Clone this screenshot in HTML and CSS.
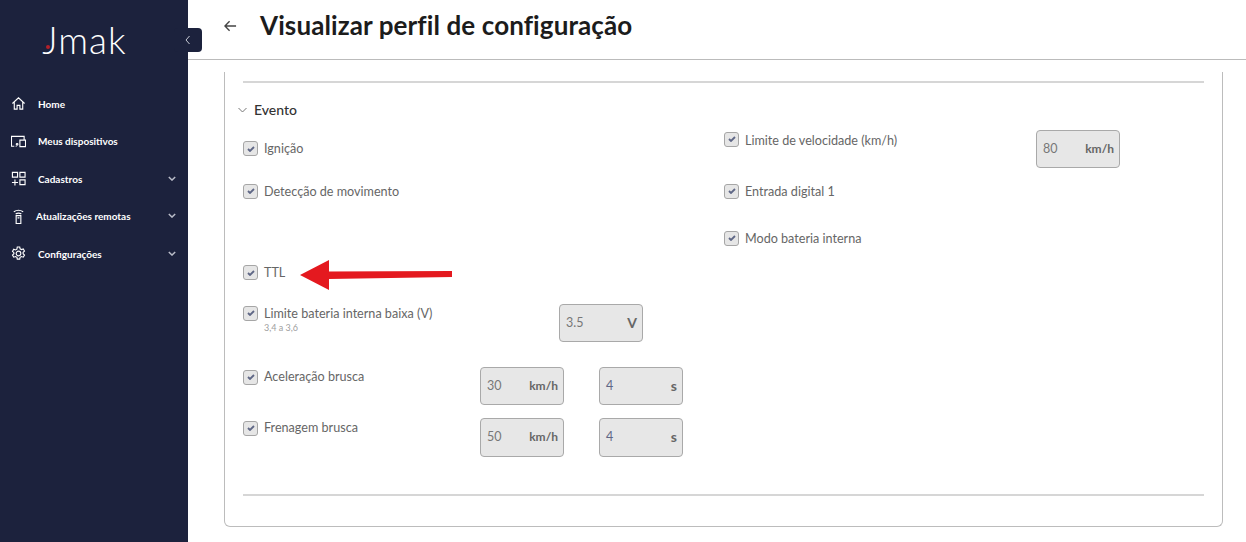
FILE: index.html
```html
<!DOCTYPE html>
<html lang="pt-BR">
<head>
  <meta charset="UTF-8">
  <title>Visualizar perfil de configuração</title>
  <link rel="stylesheet" href="styles.css">
</head>
<body>
  <div class="layout">
    <!-- Sidebar -->
    <aside class="sidebar">
      <div class="logo"><i class="logo-dot"></i>Jmak</div>
      <button class="collapse" aria-label="Recolher menu">
        <svg width="8" height="10" viewBox="0 0 8 10"><path d="M5.500 1 2 5l3.500 4" fill="none" stroke="#c9ccd6" stroke-width="1"/></svg>
      </button>
      <nav class="menu">
        <a class="menu-item">
          <svg class="menu-icon" viewBox="0 0 16 16"><path d="M1.500 8 8 2l6.500 6M3.500 6.500V14h3v-4h3v4h3V6.500"/></svg>
          <span>Home</span>
        </a>
        <a class="menu-item">
          <svg class="menu-icon" viewBox="0 0 16 16"><path d="M3.500 13H.500V2.500h13.500V6M9.500 6.500h6V13.500h-6zM5 13h1"/><circle cx="6.500" cy="11" r=".9"/></svg>
          <span>Meus dispositivos</span>
        </a>
        <a class="menu-item">
          <svg class="menu-icon" viewBox="0 0 16 16"><path d="M1.500 1.500h5.500v5h-5.500zM9.500 1.500h5.500v5h-5.500zM9.500 9.500h5.500v5h-5.500zM4.200 9v6.500M1 12.200h6.500"/></svg>
          <span>Cadastros</span>
          <svg class="menu-caret" viewBox="0 0 10 6"><path d="m1 1 4 4 4-4"/></svg>
        </a>
        <a class="menu-item narrow">
          <svg class="menu-icon" viewBox="0 0 16 16"><path d="M5.500 7h5v8.500h-5zM7 9.500h2M3 3c3-2 7-2 10 0M5 5.200c2-1 4-1 6 0"/></svg>
          <span>Atualizações remotas</span>
          <svg class="menu-caret" viewBox="0 0 10 6"><path d="m1 1 4 4 4-4"/></svg>
        </a>
        <a class="menu-item">
          <svg class="menu-icon" viewBox="0 0 16 16"><circle cx="8" cy="8" r="2.500"/><path d="m6.700 1h2.600l.4 2 1.500.8 1.900-.7 1.300 2.300-1.500 1.300v1.600l1.500 1.300-1.300 2.300-1.900-.7-1.500.8-.4 2H6.700l-.4-2-1.500-.8-1.900.7-1.300-2.300 1.500-1.300V7.100L1.600 5.800l1.300-2.300 1.900.7 1.500-.8z"/></svg>
          <span>Configurações</span>
          <svg class="menu-caret" viewBox="0 0 10 6"><path d="m1 1 4 4 4-4"/></svg>
        </a>
      </nav>
    </aside>

    <main class="main">
      <header class="topbar">
        <svg class="back" width="13" height="12" viewBox="0 0 14 12"><path d="M13 6H1.500M6 1 1 6l5 5" fill="none" stroke="#444" stroke-width="1.500"/></svg>
        <h1>Visualizar perfil de configuração</h1>
      </header>

      <div class="content">
        <section class="card">
          <hr class="rule">
          <h2 class="section-title">
            <svg width="9" height="6" viewBox="0 0 9 6"><path d="m.5 1 4 4 4-4" fill="none" stroke="#777" stroke-width="1"/></svg>
            Evento
          </h2>

          <div class="columns">
            <!-- Left column -->
            <div class="col col-left">
              <div class="row row-ignicao">
                <span class="check"><svg viewBox="0 0 8 6"><path d="m1 3 2 2 4-4"/></svg></span>
                <span class="label">Ignição</span>
              </div>
              <div class="row row-movimento">
                <span class="check"><svg viewBox="0 0 8 6"><path d="m1 3 2 2 4-4"/></svg></span>
                <span class="label">Detecção de movimento</span>
              </div>
              <div class="row row-ttl">
                <span class="check"><svg viewBox="0 0 8 6"><path d="m1 3 2 2 4-4"/></svg></span>
                <span class="label">TTL</span>
                <svg class="arrow" width="153" height="30" viewBox="0 0 153 30"><path d="M0 15 29 0v11.500L152 11v6L29 19v11z" fill="#e4191f"/></svg>
              </div>
              <div class="row row-bateria">
                <span class="check"><svg viewBox="0 0 8 6"><path d="m1 3 2 2 4-4"/></svg></span>
                <div class="label-wide">
                  <span class="label">Limite bateria interna baixa (V)</span>
                  <small class="hint">3,4 a 3,6</small>
                </div>
                <div class="field"><span>3.5</span><b class="unit-large">V</b></div>
              </div>
              <div class="row row-pair">
                <span class="check"><svg viewBox="0 0 8 6"><path d="m1 3 2 2 4-4"/></svg></span>
                <span class="label label-pair">Aceleração brusca</span>
                <div class="field"><span>30</span><b>km/h</b></div>
                <div class="field"><span class="num">4</span><b class="unit-large">s</b></div>
              </div>
              <div class="row row-pair last">
                <span class="check"><svg viewBox="0 0 8 6"><path d="m1 3 2 2 4-4"/></svg></span>
                <span class="label label-pair">Frenagem brusca</span>
                <div class="field"><span>50</span><b>km/h</b></div>
                <div class="field"><span class="num">4</span><b class="unit-large">s</b></div>
              </div>
            </div>

            <!-- Right column -->
            <div class="col col-right">
              <div class="row row-velocidade">
                <span class="check"><svg viewBox="0 0 8 6"><path d="m1 3 2 2 4-4"/></svg></span>
                <span class="label label-speed">Limite de velocidade (km/h)</span>
                <div class="field"><span>80</span><b>km/h</b></div>
              </div>
              <div class="row row-entrada">
                <span class="check"><svg viewBox="0 0 8 6"><path d="m1 3 2 2 4-4"/></svg></span>
                <span class="label">Entrada digital 1</span>
              </div>
              <div class="row">
                <span class="check"><svg viewBox="0 0 8 6"><path d="m1 3 2 2 4-4"/></svg></span>
                <span class="label">Modo bateria interna</span>
              </div>
            </div>
          </div>

          <hr class="rule rule-bottom">
        </section>
      </div>
    </main>
  </div>
</body>
</html>
```

FILE: styles.css
```css
* {
  box-sizing: border-box;
}

body {
  margin: 0;
  font-family: "Lato", "Open Sans", sans-serif;
  color: #333;
  background-color: #fff;
}

.layout {
  display: flex;
  height: 542px;
  overflow: hidden;
}

/* Sidebar */
.sidebar {
  position: relative;
  flex: 0 0 188px;
  background-color: #1c223d;
  color: #fff;
}

.logo {
  position: relative;
  margin-top: 17px;
  padding-right: 19px;
  text-align: center;
  font-size: 37px;
  font-weight: 300;
  line-height: 46px;
  letter-spacing: 1px;
}

.logo-dot {
  position: absolute;
  left: 46px;
  top: 28px;
  width: 4px;
  height: 4px;
  border-radius: 50%;
  background-color: #b3202a;
}

.collapse {
  position: absolute;
  top: 28px;
  right: -14px;
  display: flex;
  align-items: center;
  width: 28px;
  height: 24px;
  padding: 0 0 0 10px;
  background-color: #1c223d;
  border: none;
  border-radius: 4px;
}

.menu {
  display: flex;
  flex-direction: column;
  margin-top: 22px;
}

.menu-item {
  display: flex;
  align-items: center;
  height: 37.500px;
  padding-left: 11px;
  font-size: 10px;
  font-weight: 700;
}

.menu-item span {
  margin-left: 12px;
  flex: 1;
}

.menu-item.narrow span {
  margin-left: 10px;
}

.menu-icon {
  flex: 0 0 15px;
  width: 15px;
  height: 15px;
  fill: none;
  stroke: #fff;
  stroke-width: 1.200;
}

.menu-caret {
  width: 8px;
  height: 5px;
  margin: 0 12px 1px 0;
  fill: none;
  stroke: #b9bcc8;
  stroke-width: 1.800;
}

/* Main */
.main {
  flex: 1;
  min-width: 0;
}

.topbar {
  display: flex;
  align-items: center;
  height: 60px;
  padding: 0 0 7px 36px;
  border-bottom: 1px solid #bbb;
  background-color: #fff;
}

.back {
  margin-right: 23px;
}

h1 {
  margin: 0 0 2px;
  font-size: 26px;
  font-weight: 700;
  letter-spacing: 0.1px;
  color: #1c1c1c;
}

.content {
  padding: 12px 23px 0 36px;
}

.card {
  height: 455px;
  padding: 9px 18px 0;
  border: 1px solid #bcbcbc;
  border-top: none;
  border-radius: 0 0 6px 6px;
}

.rule {
  height: 2px;
  margin: 0;
  border: none;
  background-color: #d6d6d6;
}

.rule-bottom {
  margin-top: 23.500px;
}

.section-title {
  display: flex;
  align-items: center;
  gap: 7px;
  margin: 17px 0 0 -5px;
  font-size: 14px;
  font-weight: 500;
  line-height: 20px;
  color: #333;
}

.columns {
  display: flex;
}

.col-left {
  flex: 0 0 481px;
  padding-top: 20px;
}

.col-right {
  flex: 1;
  padding-top: 10.500px;
}

/* Form rows */
.row {
  display: flex;
  align-items: flex-start;
  font-size: 12.600px;
  line-height: 18px;
  color: #666;
}

.check {
  display: flex;
  align-items: center;
  justify-content: center;
  flex: 0 0 15px;
  height: 15px;
  margin: 1px 6px 0 0;
  background-color: #e6e6e6;
  border: 1px solid #a6a6a6;
  border-radius: 3px;
}

.check svg {
  width: 8px;
  height: 6px;
  fill: none;
  stroke: #5f6786;
  stroke-width: 1.800;
}

.label {
  white-space: nowrap;
}

.row-ignicao {
  height: 42.500px;
}

.row-movimento {
  height: 81.500px;
}

.row-ttl {
  position: relative;
  height: 40.500px;
}

.arrow {
  position: absolute;
  left: 57px;
  top: -4.500px;
}

.row-bateria {
  height: 64px;
}

.label-wide {
  flex: 0 0 295px;
}

.hint {
  display: block;
  margin-top: -1px;
  font-size: 9px;
  line-height: 11px;
  color: #a0a0a0;
}

.row-pair {
  height: 51px;
}

.row-pair .label {
  margin-top: -1px;
}

.row-pair .field {
  margin-top: -2px;
}

.row-pair .field + .field {
  margin-left: 35px;
}

.row-pair.last .field {
  height: 39px;
}

.label-pair {
  flex: 0 0 216px;
}

.field {
  display: flex;
  align-items: center;
  justify-content: space-between;
  width: 84px;
  height: 38px;
  margin-top: -1px;
  padding: 0 5px 0 6px;
  background-color: #e7e7e7;
  border: 1px solid #a9a9a9;
  border-radius: 4px;
  font-size: 12.500px;
  color: #777;
}

.field b {
  font-size: 12px;
  color: #666;
}

.field b.unit-large {
  font-size: 14px;
}

.field .num {
  color: #5f6786;
}

.row-velocidade {
  height: 52px;
}

.label-speed {
  flex: 0 0 291px;
  margin-top: 1px;
}

.row-entrada {
  height: 47px;
}
```
